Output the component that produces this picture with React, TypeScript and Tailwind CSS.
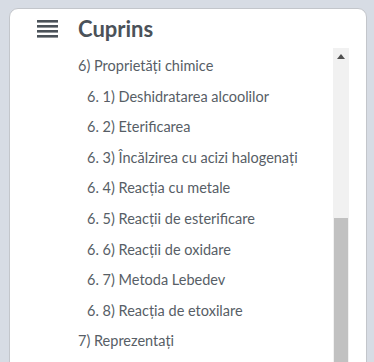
const items = [
  { label: "6) Proprietăți chimice", sub: false },
  { label: "6. 1) Deshidratarea alcoolilor", sub: true },
  { label: "6. 2) Eterificarea", sub: true },
  { label: "6. 3) Încălzirea cu acizi halogenați", sub: true },
  { label: "6. 4) Reacția cu metale", sub: true },
  { label: "6. 5) Reacții de esterificare", sub: true },
  { label: "6. 6) Reacții de oxidare", sub: true },
  { label: "6. 7) Metoda Lebedev", sub: true },
  { label: "6. 8) Reacția de etoxilare", sub: true },
  { label: "7) Reprezentați", sub: false },
];

function MenuIcon() {
  return (
    <svg width="21" height="18" viewBox="0 0 21 18" className="shrink-0">
      <rect x="0" y="0" width="21" height="2.6" fill="#4b5259" />
      <rect x="0" y="5" width="21" height="2.6" fill="#4b5259" />
      <rect x="0" y="10" width="21" height="2.6" fill="#4b5259" />
      <rect x="0" y="15" width="21" height="2.6" fill="#4b5259" />
    </svg>
  );
}

export default function App() {
  return (
    <div
      className="h-[362px] w-[374px] overflow-hidden bg-[#d7dce4] pl-[9px] pr-[7px] pt-[8px]"
      style={{ fontFamily: 'Lato, "Noto Sans", sans-serif' }}
    >
      <div className="h-[380px] rounded-t-[9px] border border-[#c3c6cb] bg-white">
        {/* HEADER */}
        <div className="flex h-[39px] items-center gap-[20px] pl-[27px] pt-[1px]">
          <MenuIcon />
          <h2 className="text-[22px] font-bold leading-none text-[#4b5259]">
            Cuprins
          </h2>
        </div>

        {/* LIST + SCROLLBAR */}
        <div className="flex h-[340px] pr-[17px]">
          <div className="flex-1 overflow-hidden pl-[68px] pt-[3px]">
            {items.map((it) => (
              <p
                key={it.label}
                className={`h-[30.6px] whitespace-nowrap text-[14.5px] leading-[30.6px] text-[#575e66] ${it.sub ? "pl-[9px]" : ""}`}
              >
                {it.label}
              </p>
            ))}
          </div>

          <div className="flex w-[16px] flex-col bg-[#f1f1f1]">
            <div className="flex h-[17px] items-center justify-center">
              <svg width="8" height="5" viewBox="0 0 8 5">
                <path d="M0 5 L4 0 L8 5 Z" fill="#505050" />
              </svg>
            </div>
            <div className="h-[153px]" />
            <div className="mx-[1px] flex-1 bg-[#c1c1c1]" />
          </div>
        </div>
      </div>
    </div>
  );
}
